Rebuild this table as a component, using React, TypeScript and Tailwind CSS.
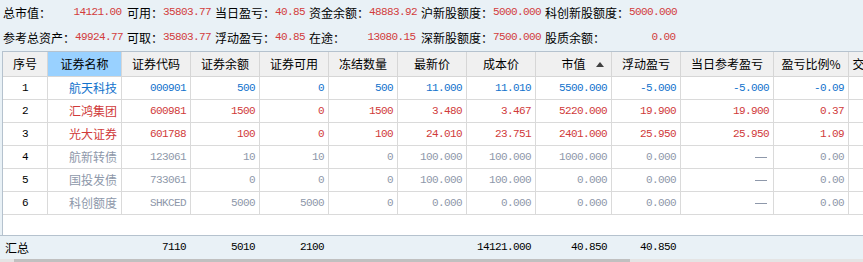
import React from 'react'

const CN = "font-['Noto_Sans_CJK_SC','Noto_Sans',sans-serif] text-[12px]"
const NUM = "font-['Liberation_Mono','DejaVu_Sans_Mono',monospace] text-[11px] tracking-[-0.6px]"

// column widths, left to right (last one runs off the window)
const COLS = [
  'w-[45px]', 'w-[74px]', 'w-[69px]', 'w-[69px]', 'w-[69px]', 'w-[69px]', 'w-[69px]',
  'w-[69px]', 'w-[76px]', 'w-[69px]', 'w-[93px]', 'w-[75px]', 'w-[56px]',
]

const HEADERS = ['序号', '证券名称', '证券代码', '证券余额', '证券可用', '冻结数量', '最新价', '成本价', '市值', '浮动盈亏', '当日参考盈亏', '盈亏比例%', '交易市场']

const TONE = {
  blue: 'text-[#1272cc]',
  red: 'text-[#d03a3a]',
  gray: 'text-[#8e98aa]',
}

type Row = { tone: keyof typeof TONE; cells: string[] }

const ROWS: Row[] = [
  { tone: 'blue', cells: ['航天科技', '000901', '500', '0', '500', '11.000', '11.010', '5500.000', '-5.000', '-5.000', '-0.09'] },
  { tone: 'red', cells: ['汇鸿集团', '600981', '1500', '0', '1500', '3.480', '3.467', '5220.000', '19.900', '19.900', '0.37'] },
  { tone: 'red', cells: ['光大证券', '601788', '100', '0', '100', '24.010', '23.751', '2401.000', '25.950', '25.950', '1.09'] },
  { tone: 'gray', cells: ['航新转债', '123061', '10', '10', '0', '100.000', '100.000', '1000.000', '0.000', '—', '0.00'] },
  { tone: 'gray', cells: ['国投发债', '733061', '0', '0', '0', '100.000', '100.000', '0.000', '0.000', '—', '0.00'] },
  { tone: 'gray', cells: ['科创额度', 'SHKCED', '5000', '5000', '0', '0.000', '0.000', '0.000', '0.000', '—', '0.00'] },
]

const INFO = [
  [
    { label: '总市值：', value: '14121.00', w: 'w-[118px]' },
    { label: '可用：', value: '35803.77', w: 'w-[82px]' },
    { label: '当日盈亏：', value: '40.85', w: 'w-[88px]' },
    { label: '资金余额：', value: '48883.92', w: 'w-[106px]' },
    { label: '沪新股额度：', value: '5000.000', w: 'w-[118px]' },
    { label: '科创新股额度：', value: '5000.000', w: 'w-[130px]' },
  ],
  [
    { label: '参考总资产：', value: '49924.77', w: 'w-[118px]' },
    { label: '可取：', value: '35803.77', w: 'w-[82px]' },
    { label: '浮动盈亏：', value: '40.85', w: 'w-[88px]' },
    { label: '在途：', value: '13080.15', w: 'w-[106px]' },
    { label: '深新股额度：', value: '7500.000', w: 'w-[118px]' },
    { label: '股质余额：', value: '0.00', w: 'w-[130px]' },
  ],
]

const SUMMARY = ['', '', '7110', '5010', '2100', '', '', '14121.000', '40.850', '40.850', '', '']

export default function App() {
  return (
    <div className="w-[863px] h-[262px] overflow-hidden bg-[#e9f1f6] flex flex-col">
      {/* 资金概要 */}
      <div className="h-[51px] shrink-0 pl-[3px]">
        {INFO.map((line, i) => (
          <div key={i} className="h-[25px] flex items-center">
            {line.map((it) => (
              <div key={it.label} className={`${it.w} shrink-0 mr-[6px] flex items-center justify-between whitespace-nowrap`}>
                <span className={`${CN} text-black`}>{it.label}</span>
                <span className={`${NUM} text-[#d23c3c] mr-[-0.6px]`}>{it.value}</span>
              </div>
            ))}
          </div>
        ))}
      </div>

      {/* 持仓表 */}
      <div className="ml-[2px] border-l border-t border-[#b5c2ce] bg-white shrink-0">
        <div className="flex h-[25px] border-b border-[#d6d6d6] bg-[#f0f0f0]">
          {HEADERS.map((h, i) => (
            <div
              key={h}
              className={`${COLS[i]} shrink-0 relative flex items-center justify-center border-r border-[#d6d6d6] whitespace-nowrap ${CN} text-black ${i === 1 ? 'bg-[#99d1ff]' : ''}`}
            >
              {h}
              {i === 8 && (
                <svg className="absolute right-[7px] top-[10px]" width="8" height="5" viewBox="0 0 8 5">
                  <path d="M0 5 L4 0 L8 5 Z" fill="#404040" />
                </svg>
              )}
            </div>
          ))}
        </div>

        {ROWS.map((r, ri) => (
          <div key={ri} className="flex h-[23px] border-b border-[#dadada]">
            <div className={`${COLS[0]} shrink-0 flex items-center justify-center border-r border-[#dadada] ${NUM} text-black`}>
              {ri + 1}
            </div>
            {r.cells.map((c, ci) => (
              <div
                key={ci}
                className={`${COLS[ci + 1]} shrink-0 flex items-center justify-end pr-[4px] border-r border-[#dadada] whitespace-nowrap ${TONE[r.tone]} ${ci === 0 ? CN : NUM}`}
              >
                {c === '—' ? <span className="block w-[12px] h-px bg-[#8e98aa] mr-[2px]" /> : c}
              </div>
            ))}
            <div className={`${COLS[12]} shrink-0`} />
          </div>
        ))}

        <div className="h-[20px]" />
      </div>

      {/* 汇总 */}
      <div className="flex h-[24px] shrink-0 border-t border-[#b5c2ce] bg-[#e9f1f6] pl-[3px]">
        <div className={`${COLS[0]} shrink-0 flex items-center pl-[2px] ${CN} text-black`}>汇总</div>
        {SUMMARY.slice(1).map((v, i) => (
          <div key={i} className={`${COLS[i + 1]} shrink-0 flex items-center justify-end pr-[5px] ${NUM} text-black`}>
            {v}
          </div>
        ))}
      </div>

      {/* 横向滚动条 */}
      <div className="flex h-[3px] shrink-0">
        <div className="w-[14px] bg-[#e4e4e4]" />
        <div className="w-[616px] bg-[#c0c0c0]" />
        <div className="flex-1 bg-[#e4e4e4]" />
      </div>
    </div>
  )
}
